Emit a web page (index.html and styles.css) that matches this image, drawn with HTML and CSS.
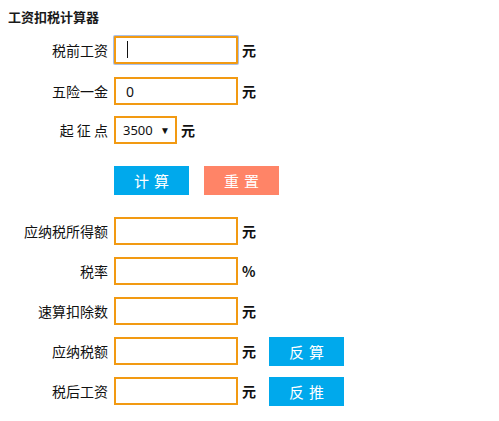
FILE: index.html
```html
<!DOCTYPE html>
<html lang="zh-CN">
<head>
    <meta charset="UTF-8">
    <title>工资扣税计算器</title>
    <link rel="stylesheet" href="styles.css">
</head>
<body>
<div class="calc">
    <h3 class="title">工资扣税计算器</h3>

    <div class="row">
        <label class="label">税前工资</label>
        <div class="field focus">
            <input type="text" class="box">
            <span class="caret"></span>
        </div>
        <span class="unit">元</span>
    </div>
    <div class="row second">
        <label class="label">五险一金</label>
        <input type="text" class="box" value="0">
        <span class="unit">元</span>
    </div>
    <div class="row">
        <label class="label">起 征 点</label>
        <div class="select">
            <span>3500</span>
            <span class="arrow">▼</span>
        </div>
        <span class="unit">元</span>
    </div>

    <div class="actions">
        <button class="btn blue">计算</button>
        <button class="btn red">重置</button>
    </div>

    <div class="row">
        <label class="label">应纳税所得额</label>
        <input type="text" class="box">
        <span class="unit">元</span>
    </div>
    <div class="row">
        <label class="label">税率</label>
        <input type="text" class="box">
        <span class="unit">%</span>
    </div>
    <div class="row">
        <label class="label">速算扣除数</label>
        <input type="text" class="box">
        <span class="unit">元</span>
    </div>
    <div class="row">
        <label class="label">应纳税额</label>
        <input type="text" class="box">
        <span class="unit">元</span>
        <button class="btn blue side">反算</button>
    </div>
    <div class="row">
        <label class="label">税后工资</label>
        <input type="text" class="box">
        <span class="unit">元</span>
        <button class="btn blue side">反推</button>
    </div>
</div>
</body>
</html>
```

FILE: styles.css
```css
body {
    margin: 8px;
    background: #fff;
    font-family: "Noto Sans CJK SC", "Noto Sans", sans-serif;
    color: #111;
}

.title {
    margin: 0 0 10px 0;
    font-size: 13px;
    line-height: 18px;
    font-weight: bold;
    color: #1a1a1a;
}

.row {
    display: flex;
    align-items: center;
    height: 28px;
    margin-bottom: 12px;
}

.row.second {
    margin-top: 13px;
    margin-bottom: 11px;
}

.label {
    width: 100px;
    margin-right: 6px;
    text-align: right;
    font-size: 14px;
    white-space: pre;
}

.box {
    box-sizing: border-box;
    width: 124px;
    height: 28px;
    margin: 0;
    padding: 0 10px;
    border: 2px solid #f29a12;
    outline: none;
    font-size: 14px;
    font-family: "Noto Sans", sans-serif;
    color: #111;
}

.field {
    position: relative;
    display: flex;
}

.focus .box {
    box-shadow: 0 0 0 1px #a9c0e8;
    border-radius: 1px;
}

.caret {
    position: absolute;
    left: 13px;
    top: 5px;
    width: 1px;
    height: 17px;
    background: #111;
}

.select {
    box-sizing: border-box;
    width: 63px;
    height: 28px;
    border: 2px solid #f29a12;
    display: flex;
    align-items: center;
    justify-content: space-between;
    padding: 0 5px 0 7px;
    font-size: 13px;
    font-family: "Noto Sans", sans-serif;
}

.arrow {
    font-size: 10px;
}

.unit {
    margin-left: 4px;
    font-size: 14px;
    font-weight: bold;
}

.actions {
    display: flex;
    gap: 15px;
    padding-left: 106px;
    margin: 22px 0 22px 0;
}

.btn {
    width: 75px;
    height: 29px;
    border: none;
    padding: 0;
    color: #fff;
    font-size: 15px;
    letter-spacing: 5px;
    text-indent: 5px;
    font-family: "Noto Sans CJK SC", sans-serif;
}

.blue {
    background: #00a9ec;
}

.red {
    background: #ff8467;
}

.side {
    margin-left: 13px;
}
```
